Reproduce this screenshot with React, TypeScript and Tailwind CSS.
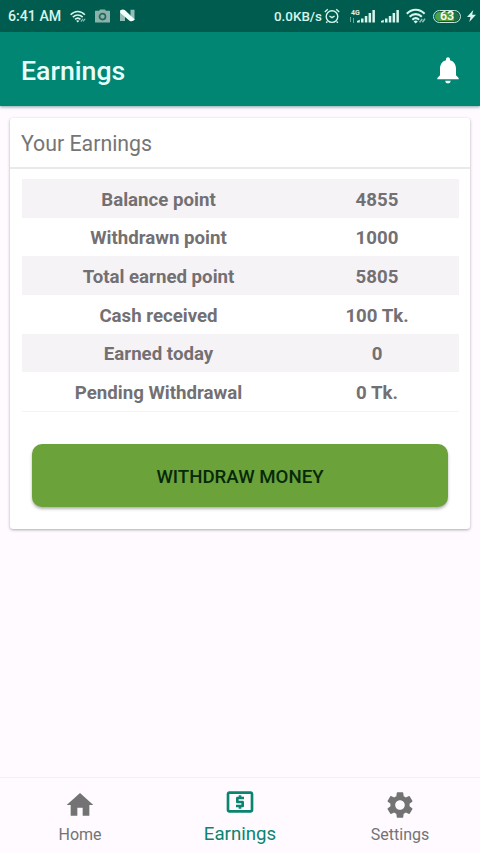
import React, { useState } from 'react';
import { MdHome, MdLocalAtm, MdNotifications, MdSettings } from 'react-icons/md';

type Tab = 'home' | 'earnings' | 'settings';

const rows = [
  { label: 'Balance point', value: '4855' },
  { label: 'Withdrawn point', value: '1000' },
  { label: 'Total earned point', value: '5805' },
  { label: 'Cash received', value: '100 Tk.' },
  { label: 'Earned today', value: '0' },
  { label: 'Pending Withdrawal', value: '0 Tk.' },
];

const tabs: { id: Tab; label: string; icon: React.ElementType }[] = [
  { id: 'home', label: 'Home', icon: MdHome },
  { id: 'earnings', label: 'Earnings', icon: MdLocalAtm },
  { id: 'settings', label: 'Settings', icon: MdSettings },
];

const WifiIcon = ({ className }: { className: string }) => (
  <svg viewBox="0 0 20 16" className={className} fill="none" stroke="currentColor" strokeWidth="2.1">
    <path d="M.8 5.8C6 .4 13.4 .4 18.6 5.8" />
    <path d="M3.6 8.8C7.2 5.2 12.2 5.2 15.8 8.8" />
    <path d="M6.3 11.7C8.4 9.7 11 9.7 13.1 11.7" />
    <path d="M9.7 15.6L7.6 13.4Q9.7 11.7 11.8 13.4Z" fill="currentColor" stroke="none" />
    <path d="M13.6 14.4l2.6-3.4M16.4 14.2l2.6-3.4" strokeWidth="1.5" opacity="0.65" />
  </svg>
);

const SignalIcon = () => (
  <svg viewBox="0 0 18 14" className="h-3.5 w-[18px]" fill="currentColor">
    <path d="M0 13.5V12l2.8-1.3v2.8zM4 9.5h2.5v4H4zM7.8 7h2.5v6.5H7.8zM11.6 4h2.5v9.5h-2.5zM15.4 1h2.5v12.5h-2.5z" />
  </svg>
);

const StatusBar = () => (
  <div className="flex h-8 shrink-0 items-center bg-[#005c4e] pl-2 pr-1 text-[#d5f5ee]">
    <span className="w-[54px] whitespace-nowrap pt-0.5 text-[14.2px] font-medium">6:41 AM</span>
    <WifiIcon className="ml-2 h-[13px] w-4" />
    {/* Screenshot camera */}
    <svg viewBox="0 0 15 14" className="-mt-px ml-[9px] h-3.5 w-[15px]">
      <path fill="#8cb3ab" d="M.5 1.8h3.7L5 .5h5l.8 1.3h3.7q.5 0 .5.6v10.5q0 .6-.5.6H.5q-.5 0-.5-.6V2.4q0-.6.5-.6z" />
      <circle cx="7.5" cy="7.6" r="3" fill="none" stroke="#23695d" strokeWidth="1.7" />
    </svg>
    <svg viewBox="0 0 15 13" className="-mt-px ml-2.5 h-[13px] w-[15px]">
      <path fill="#94beb5" d="M0 1h5v11H0zM10.5.8h4v10h-4z" />
      <path fill="#f0fffc" d="M.4 1.5Q2.6-.4 5 1.3L14.8 10.4Q12.8 13 9.8 11.9L.2 3.8z" />
    </svg>

    <span className="ml-auto w-12 whitespace-nowrap pt-0.5 text-[13.4px] font-medium">0.0KB/s</span>
    <svg viewBox="0 0 16 16" className="ml-0.5 size-4" fill="none" stroke="currentColor" strokeWidth="1.4">
      <circle cx="8" cy="8.6" r="5.8" />
      <path d="M5.4 8l2.7 1.6L10.6 8M.8 4l3-2.7M15.2 4l-3-2.7M3.4 13.5l-1.2 1.3M12.6 13.5l1.2 1.3" />
    </svg>
    <div className="ml-[11px] flex w-3 flex-col">
      <span className="text-[7px] font-bold leading-[8px]">4G</span>
      <svg viewBox="0 0 8 6" className="-ml-0.5 h-1.5 w-2 opacity-50" stroke="currentColor">
        <path d="M1.5 0v5M4.5 1v5" />
      </svg>
    </div>
    <div className="-ml-[6px] flex gap-1.5">
      <SignalIcon />
      <SignalIcon />
    </div>
    <WifiIcon className="ml-[7px] h-4 w-5" />
    <div className="ml-[7px] flex h-[13px] w-7 items-center rounded-full border-[1.5px] border-[#c9e9e0] p-px">
      <div className="flex h-full w-full items-center justify-center rounded-full bg-linear-to-r from-[#4f9f43] from-80% to-[#236f45] to-80%">
        <span className="text-[12.5px] font-medium leading-none text-white">63</span>
      </div>
    </div>
    <svg viewBox="0 0 9 12" className="ml-1.5 h-3 w-[9px]" fill="currentColor">
      <path d="M6.3 0L0 7h3.5L2.3 12 9 4.8H5.2z" />
    </svg>
  </div>
);

const App: React.FC = () => {
  const [activeTab, setActiveTab] = useState<Tab>('earnings');

  return (
    <div className="flex h-[853px] w-[480px] flex-col overflow-hidden bg-[#fefaff] font-[Roboto,sans-serif]">
      <StatusBar />

      {/* Header */}
      <header className="z-10 flex h-[74px] shrink-0 items-center justify-between bg-[#008672] pl-[21px] pr-4 text-white shadow-[0_1px_3px_rgba(0,80,80,0.5)]">
        <h1 className="pt-1 text-[26.7px] font-medium leading-8 text-[#e9fffb]">Earnings</h1>
        <button aria-label="Notifications" className="pt-px">
          <MdNotifications className="size-8" />
        </button>
      </header>

      <main className="flex-1 px-2.5 pt-3">
        <section className="h-[411px] rounded-[3px] bg-white shadow-[0_1px_3px_rgba(0,0,0,0.32)]">
          <h2 className="h-[51px] border-b-2 border-[#e9e9ec] pl-[11px] text-[21.3px] leading-[52px] text-[#757575]">
            Your Earnings
          </h2>

          <div className="ml-3 mr-[11px] mt-2.5 border-b border-[#f4f4f4]">
            {rows.map(row => (
              <div
                key={row.label}
                className="flex h-[38.67px] items-center text-center text-[18.67px] font-bold text-[#737073] odd:bg-[#f6f3f6]"
              >
                <span className="w-[273px] shrink-0 pt-[3px]">{row.label}</span>
                <span className="flex-1 pt-[3px]">{row.value}</span>
              </div>
            ))}
          </div>

          <button className="mx-[22px] mt-8 block h-[63px] w-[416px] rounded-[10px] bg-[#6ba239] pt-1 text-[18.67px] font-medium text-[#07290a] shadow-[0_2px_3px_rgba(0,0,0,0.3)]">
            WITHDRAW MONEY
          </button>
        </section>
      </main>

      {/* Bottom navigation */}
      <nav className="grid h-[76px] shrink-0 grid-cols-3 border-t border-[#f3eff4]">
        {tabs.map(({ id, label, icon: Icon }) => {
          const active = id === activeTab;
          return (
            <button
              key={id}
              onClick={() => setActiveTab(id)}
              className={`flex flex-col items-center ${active ? 'pt-2 text-[#0a8470]' : 'pt-[11px] text-[#737373]'}`}
            >
              <Icon className="size-8" />
              <span className={active ? 'text-[18.67px] leading-[32px]' : 'text-[16px] leading-[28px]'}>{label}</span>
            </button>
          );
        })}
      </nav>
    </div>
  );
};

export default App;
